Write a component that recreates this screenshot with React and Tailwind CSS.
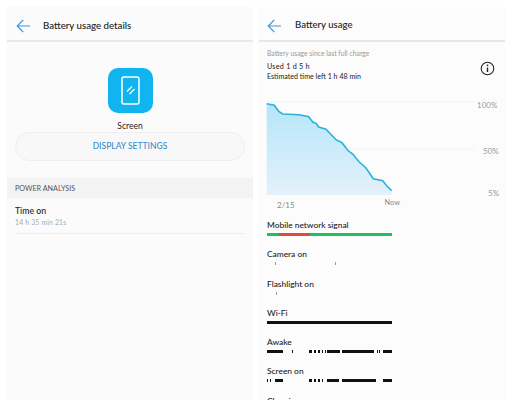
const FONT = "font-['Lato','Noto_Sans',sans-serif]";

function Back() {
  return (
    <svg width="15" height="14" viewBox="0 0 15 14" fill="none" stroke="#3f97d6" strokeWidth="1.2">
      <path d="M14 7H1.2M7.3 0.8L1.2 7l6.1 6.2" />
    </svg>
  );
}

function Bar({ segs, color = "#111", h = "h-[3px]" }) {
  return (
    <div className={`flex w-[125px] shrink-0 ${h}`}>
      {segs.map(([from, to, c], i) => {
        const prev = i ? segs[i - 1][1] : 0;
        return <div key={i} style={{ marginLeft: from - prev, width: to - from, background: c || color }} />;
      })}
    </div>
  );
}

function Row({ label, segs, h }) {
  return (
    <div className="flex h-[29.3px] shrink-0 flex-col">
      <div className="h-[15px] shrink-0 text-[8.4px] font-medium leading-[15px] text-[#222]">{label}</div>
      <Bar segs={segs} h={h} />
    </div>
  );
}

const z = (list) => list.map(([a, b]) => [(a - 32) / 3, (b - 32) / 3]);

const line = "266.7,105.7 274.3,107.3 278.7,113.3 282.7,116 299.3,116.7 308.7,118.7 312.7,124 316,125.3 318.7,129 326,131.3 336,141.7 342,144.7 347.7,152.3 352.7,156 359.3,164 366,170 373.3,180.7 382.7,182.7 386.7,187.7 391.7,192.7"
  .split(" ").map((p) => { const [x, y] = p.split(",").map(Number); return `${(x - 266).toFixed(1)},${(y - 98).toFixed(1)}`; }).join(" ");

export default function App() {
  return (
    <div className={`flex h-[400px] w-[511px] gap-[6px] overflow-hidden bg-white pl-[7px] pt-[7px] ${FONT}`}>
      {/* Left panel */}
      <div className="flex h-[393px] w-[246px] flex-col bg-[#fbfbfb]">
        <div className="flex h-[35px] shrink-0 items-center gap-[12px] border-b-2 border-[#e8e8e8] pl-[9px] pt-[4px]">
          <Back />
          <span className="text-[9.7px] font-medium text-[#222]">Battery usage details</span>
        </div>
        <div className="mt-[26px] flex flex-col items-center">
          <div className="flex size-[45px] items-center justify-center rounded-[10px] bg-[#10b4ee]">
            <svg width="19" height="29" viewBox="0 0 19 29" fill="none" stroke="#fff">
              <rect x="1" y="1" width="17" height="27" rx="2" strokeWidth="1.5" />
              <path d="M6 15.5L11 10.5M8.5 18L13.5 13" strokeWidth="1.3" />
            </svg>
          </div>
          <div className="mt-[8px] h-[11px] text-[8.5px] leading-[11px] text-[#222]">Screen</div>
        </div>
        <div className="mx-[8px] flex h-[29px] shrink-0 items-center justify-center rounded-full border border-[#efefef] bg-[#f8f8f8] text-[8.5px] font-medium text-[#3a8fd0]">
          DISPLAY SETTINGS
        </div>
        <div className="mt-[17px] flex h-[20px] shrink-0 items-center bg-[#f3f3f3] pl-[8px] pt-[2px] text-[7.2px] text-[#555]">POWER ANALYSIS</div>
        <div className="mx-[8px] flex h-[36px] shrink-0 flex-col border-b border-[#eeeeee] pt-[7px]">
          <div className="text-[8.7px] font-medium leading-[12px] text-[#222]">Time on</div>
          <div className="text-[6.8px] leading-[11px] tracking-[0.2px] text-[#aaa]">14 h 35 min 21s</div>
        </div>
      </div>

      {/* Right panel */}
      <div className="flex h-[393px] w-[246px] flex-col bg-[#fcfcfc]">
        <div className="flex h-[35px] shrink-0 items-center gap-[13px] border-b-2 border-[#e8e8e8] pl-[8px] pt-[4px]">
          <Back />
          <span className="text-[9.6px] font-medium text-[#222]">Battery usage</span>
        </div>
        <div className="flex shrink-0 items-start justify-between pl-[8px] pr-[10px] pt-[6px]">
          <div>
            <div className="text-[6.8px] leading-[10px] text-[#999]">Battery usage since last full charge</div>
            <div className="mt-[4px] text-[7.2px] leading-[10px] tracking-[0.25px] text-[#222]">Used 1 d 5 h</div>
            <div className="text-[7.1px] leading-[10px] text-[#222]">Estimated time left 1 h 48 min</div>
          </div>
          <svg className="mt-[13px]" width="15" height="15" viewBox="0 0 15 15" fill="none" stroke="#222">
            <circle cx="7.5" cy="7.5" r="6.3" strokeWidth="1.1" />
            <path d="M7.5 6.5V11" strokeWidth="1.4" />
            <circle cx="7.5" cy="4.3" r="0.9" fill="#222" stroke="none" />
          </svg>
        </div>

        <div className="mt-[14px] flex shrink-0 pl-[7px]">
          <svg width="228" height="100" viewBox="0 0 228 100" className="shrink-0">
            <defs>
              <linearGradient id="fill" x1="0" y1="0" x2="0" y2="1">
                <stop offset="0" stopColor="#b4e6f9" />
                <stop offset="1" stopColor="#e4f1fb" />
              </linearGradient>
            </defs>
            <path d="M0.7 6H210M0.7 53H210" stroke="#f3f3f3" strokeWidth="1" />
            <polygon points={`0.7,99 ${line} 125.7,99`} fill="url(#fill)" />
            <polyline points={line} fill="none" stroke="#2bb2d8" strokeWidth="1.6" />
          </svg>
        </div>
        <div className="relative shrink-0">
          <span className="absolute left-[218px] top-[-96px] text-[8px] leading-[10px] text-[#999]">100%</span>
          <span className="absolute left-[224px] top-[-50px] text-[8px] leading-[10px] text-[#999]">50%</span>
          <span className="absolute left-[229px] top-[-8px] text-[8px] leading-[10px] text-[#999]">5%</span>
        </div>
        <div className="flex h-[18px] shrink-0 pt-[2px] text-[8px] leading-[10px] text-[#888]">
          <span className="ml-[18px] mt-[2px]">2/15</span>
          <span className="ml-[90px] text-[7.4px]">Now</span>
        </div>
        <div className="mt-[4px] flex shrink-0 flex-col pl-[8px]">
          <Row
            label="Mobile network signal"
            segs={[
              [0, 12, "#1fc15e"],
              [12, 43, "#e14b35"],
              [43, 125, "#1fc15e"],
            ]}
          />
          <Row label="Camera on" segs={[[8, 8.7, "#999"], [68, 68.7, "#999"]]} />
          <Row label="Flashlight on" segs={[[9, 9.7, "#999"]]} />
          <Row label="Wi-Fi" segs={[[0, 125]]} />
          <Row
            label="Awake"
            h="h-[2.5px]"
            segs={z([[32, 80], [107, 109], [157, 168], [172, 180], [185, 190], [197, 199], [205, 207], [213, 250], [258, 355], [362, 364], [370, 372], [382, 408]])}
          />
          <Row
            label="Screen on"
            h="h-[2.5px]"
            segs={z([[32, 34], [40, 42], [55, 80], [157, 168], [172, 180], [185, 190], [197, 199], [213, 250], [258, 360], [382, 408]])}
          />
          <Row label="Charging" segs={[]} />
        </div>
      </div>
    </div>
  );
}
